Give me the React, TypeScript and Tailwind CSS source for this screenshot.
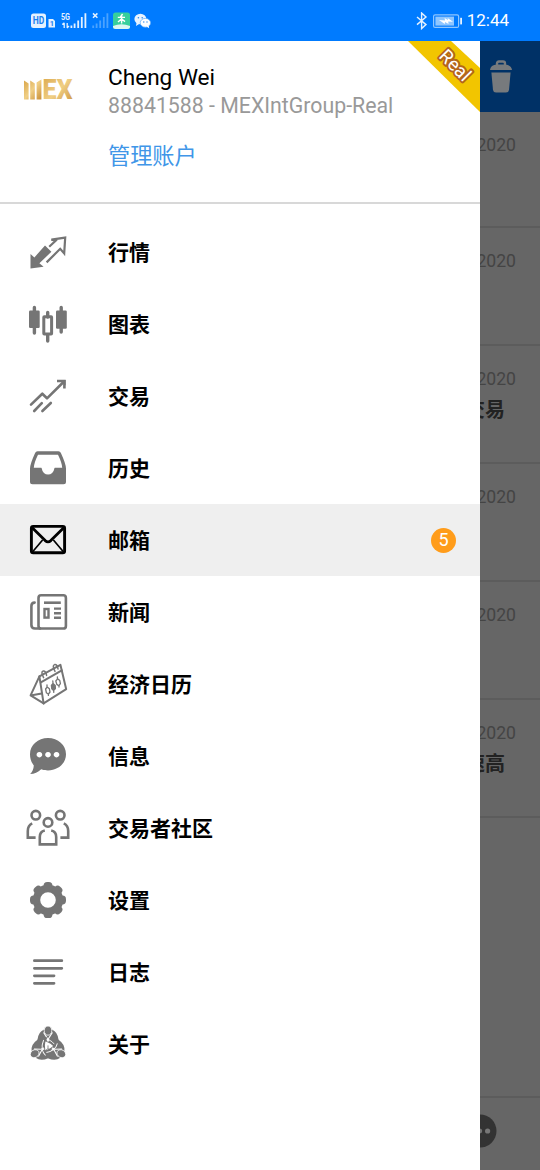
import type { ReactNode } from 'react';

interface MenuItem {
  label: string;
  icon: ReactNode;
  active?: boolean;
  badge?: number;
}

interface MailRow {
  date: string;
  title?: string;
}

const QuotesIcon = () => (
  <>
    <path d="M6.5 26 L10.4 29.4 L21 17.6 L27.4 23.8 L15.4 35.2 L19.6 38.8 L6.5 40.6 Z" fill="currentColor" />
    <path
      d="M25.2 18.8 L31.6 12.8 L27.4 11.6 L41.2 9.6 L40.2 25.4 L36.2 20.8 L22.6 34.4"
      fill="none"
      stroke="currentColor"
      strokeWidth="2.2"
    />
  </>
);

const ChartIcon = () => (
  <>
    <path d="M10.4 7.5 V33 M37.2 7.5 V32" stroke="currentColor" strokeWidth="3.4" strokeLinecap="round" />
    <path d="M23.7 12.5 V17 M23.7 35 V41" stroke="currentColor" strokeWidth="3.4" strokeLinecap="round" />
    <rect x="5" y="10.5" width="10.7" height="17.5" rx="1.2" fill="currentColor" />
    <rect x="32" y="10.5" width="10.8" height="18.3" rx="1.2" fill="currentColor" />
    <rect x="19.8" y="16.8" width="7.8" height="17.2" rx="0.5" fill="none" stroke="currentColor" strokeWidth="3" />
  </>
);

const TradeIcon = () => (
  <g fill="none" stroke="currentColor" strokeWidth="2.6">
    <path d="M7 32.6 L18.3 21.7 L23 26.3 L39.5 10" strokeLinecap="round" strokeLinejoin="round" />
    <path d="M10.2 39 L17.8 31.2 M18.4 39 L26.8 31" strokeLinecap="round" />
    <path d="M33 9 H40.4 V16.4" />
    <path d="M36 8 H41.6 V13.6 Z" fill="currentColor" stroke="none" />
  </g>
);

const HistoryIcon = () => (
  <path
    fillRule="evenodd"
    fill="currentColor"
    d="M13.5 7.3 H34.5 Q36.2 7.3 36.9 8.9 Q42 20 42 24.5 V37.8 Q42 40.3 39.5 40.3 H8.5 Q6 40.3 6 37.8 V24.5 Q6 20 11.1 8.9 Q11.8 7.3 13.5 7.3 Z M14 10.8 Q10 19 9.8 23.8 H17.3 Q17.8 24 17.9 25 A6.2 6.4 0 0 0 30.2 25 Q30.3 24 30.8 23.8 H38.2 Q38 19 34 10.8 Z"
  />
);

const MailIcon = () => (
  <g fill="none" stroke="currentColor">
    <rect x="7.4" y="10.4" width="33.2" height="26.4" rx="1.8" strokeWidth="2.9" />
    <path d="M8 11.5 L21.2 24.6 Q24 27.2 26.8 24.6 L40 11.5" strokeWidth="2.8" />
    <path d="M8.2 36.2 L18.6 24 M39.8 36.2 L29.4 24" strokeWidth="1.7" />
  </g>
);

const NewsIcon = () => (
  <g fill="none" stroke="currentColor" strokeWidth="2.6">
    <rect x="14.5" y="7.3" width="27.4" height="33.2" rx="2.6" />
    <path d="M10.6 14.6 Q7.4 14.6 7.4 18 V37 Q7.4 40.5 11 40.5 H16" strokeLinecap="round" />
    <path d="M20 14.7 H36.8" />
    <rect x="20.5" y="21" width="4" height="8.6" strokeWidth="2.4" />
    <path d="M30 20.6 H37 M30 25.2 H37 M30 29.8 H37" strokeWidth="2.4" />
  </g>
);

const CalendarIcon = () => (
  <g fill="none" stroke="currentColor" strokeWidth="2" strokeLinejoin="round" strokeLinecap="round">
    <path d="M15.4 16.4 L36.4 4.8 L42.2 29.2 L19.6 43.4 Z" />
    <path d="M15.4 16.4 L6.6 35.4 L19.6 43.4 M6.6 35.4 L17.6 33.6" />
    <path d="M16.8 22.4 L37.8 10.4" />
    <path d="M19.6 17.6 Q16.4 11.8 19.2 11 Q21.8 10.6 22.6 15.4 M31 11.4 Q27.8 5.4 30.6 4.6 Q33.4 4.2 34 9" strokeWidth="1.5" />
    <g strokeWidth="1.3">
      <path d="M23 24.8 V27 M24.4 34 V35.4 M21.6 29 L23.2 27 L25.4 28.8 L26 32 L24.4 34.2 L22.4 32.8 Z" />
      <path d="M28.8 21 L29.8 32.4 M27.4 25.4 L29 23.4 L31.2 25.4 L31.4 28.6 L29.6 30.6 L27.8 28.8 Z" fill="currentColor" />
      <path d="M33.4 16.8 V19 M35 25.6 V27 M31.8 21 L33.6 18.8 L35.8 20.6 L36.4 23.6 L34.8 25.8 L32.8 24.4 Z" />
    </g>
  </g>
);

const ChatIcon = () => (
  <path
    fillRule="evenodd"
    fill="currentColor"
    d="M24 6 C34 6 42 13 42 22.2 C42 31.4 34 38.4 24 38.4 C21.6 38.4 19.2 38 17.2 37.2 C14 40.2 10.4 41.8 6.2 42 C8.4 39.6 9.6 36.8 9.8 33.4 C7.4 30.4 6 26.6 6 22.2 C6 13 14 6 24 6 Z M15.4 19.9 a2.8 2.8 0 1 0 0.01 0 Z M24 19.9 a2.8 2.8 0 1 0 0.01 0 Z M32.5 19.9 a2.8 2.8 0 1 0 0.01 0 Z"
  />
);

const CommunityIcon = () => (
  <g fill="none" stroke="currentColor" strokeWidth="2.6">
    <circle cx="11.8" cy="11.2" r="4.3" />
    <circle cx="36.2" cy="11.2" r="4.3" />
    <circle cx="24" cy="18.4" r="4.3" />
    <path d="M8.2 19.4 Q3.8 21.6 3.8 27 V33.6 H11.6" />
    <path d="M39.8 19.4 Q44.2 21.6 44.2 27 V33.6 H36.4" />
    <path d="M20.8 26.6 Q15.8 27.6 15.8 33 V40.4 H32.2 V33 Q32.2 27.6 27.2 26.6" />
  </g>
);

const gearAngles = [0, 45, 90, 135, 180, 225, 270, 315];

const SettingsIcon = () => (
  <>
    <circle cx="24" cy="24" r="11.5" fill="none" stroke="currentColor" strokeWidth="7.4" />
    {gearAngles.map((a) => (
      <rect key={a} x="19.6" y="6" width="8.8" height="9" rx="3.6" fill="currentColor" transform={`rotate(${a} 24 24)`} />
    ))}
  </>
);

const JournalIcon = () => (
  <path
    d="M10.4 12.7 H37.8 M10.4 20.3 H37.8 M10.4 27.8 H30 M10.4 35.3 H30"
    stroke="currentColor"
    strokeWidth="2.8"
    strokeLinecap="round"
  />
);

const AboutIcon = () => (
  <>
    {[0, 120, 240].map((a) => (
      <g key={a} transform={`rotate(${a} 24 26)`}>
        <path
          d="M20 9.4 Q14 12 13.4 20 Q12.6 22.6 15 22.2 Q19.6 20.2 24 22.6 Q29.4 24.8 31.6 29.8 Q35.4 26.6 34.6 20 Q34 12 28 9.4 Z"
          fill="currentColor"
        />
        <path d="M19.6 12.4 L23.4 18.4 V21.4 M28.4 12.4 L24.6 18.4 V21.4" fill="none" stroke="#fff" strokeWidth="1.1" />
        <ellipse cx="24" cy="10.6" rx="3.8" ry="4.6" fill="currentColor" stroke="#fff" strokeWidth="0.8" />
        <path d="M17 19.2 Q24.6 16.8 31.4 25.2" fill="none" stroke="#fff" strokeWidth="0.9" />
      </g>
    ))}
    <path d="M24 25.4 V28.6 M21.6 30.4 L24 28.6 L26.4 30.4" fill="none" stroke="currentColor" strokeWidth="0.8" />
  </>
);

const menu: MenuItem[] = [
  { label: '行情', icon: <QuotesIcon /> },
  { label: '图表', icon: <ChartIcon /> },
  { label: '交易', icon: <TradeIcon /> },
  { label: '历史', icon: <HistoryIcon /> },
  { label: '邮箱', icon: <MailIcon />, active: true, badge: 5 },
  { label: '新闻', icon: <NewsIcon /> },
  { label: '经济日历', icon: <CalendarIcon /> },
  { label: '信息', icon: <ChatIcon /> },
  { label: '交易者社区', icon: <CommunityIcon /> },
  { label: '设置', icon: <SettingsIcon /> },
  { label: '日志', icon: <JournalIcon /> },
  { label: '关于', icon: <AboutIcon /> },
];

const mails: MailRow[] = [
  { date: '2020' },
  { date: '2020' },
  { date: '2020', title: '交易' },
  { date: '2020' },
  { date: '2020' },
  { date: '2020', title: '速高' },
];

function StatusBar() {
  return (
    <div className="flex h-[41px] shrink-0 items-center justify-between bg-[#007bff] pl-[31px] pr-[31px] text-white">
      <div className="flex items-center">
        {/* HD */}
        <svg width="25" height="18" viewBox="0 0 25 18">
          <rect x="0" y="1.5" width="15" height="14.5" rx="2.5" fill="#e4f1ff" />
          <text x="7.5" y="12.4" textAnchor="middle" fontSize="10" fontWeight="700" fill="#1a7ff0" textLength="11.5" lengthAdjust="spacingAndGlyphs">HD</text>
          <path d="M17.5 7 H22 L24 9 V15.5 H17.5 Z" fill="#e4f1ff" />
          <text x="20.8" y="14.2" textAnchor="middle" fontSize="7.5" fontWeight="700" fill="#1a7ff0">1</text>
        </svg>
        {/* 5G signal */}
        <svg className="ml-[5px]" width="26" height="18" viewBox="0 0 26 18">
          <text x="0" y="7.6" fontSize="8.6" fontWeight="700" fill="#e4f1ff" textLength="9" lengthAdjust="spacingAndGlyphs">5G</text>
          <path d="M3.2 16 V11 M1.2 12.6 L3.4 10.8 M6.2 11 V16 M6 16 L8 14" stroke="#e4f1ff" strokeWidth="1.3" fill="none" />
          <path d="M10.4 16 V13.5 M13.6 16 V11.5 M17.2 16 V8.5 M20.8 16 V5 M24.4 16 V1.2" stroke="#e4f1ff" strokeWidth="1.8" />
        </svg>
        <svg className="ml-[5px]" width="17" height="18" viewBox="0 0 17 18">
          <path d="M1 1.4 L5.4 5.8 M5.4 1.4 L1 5.8" stroke="#e4f1ff" strokeWidth="1.5" />
          <path d="M1.2 16 V13.5 M4.6 16 V11.5 M8.2 16 V8.5 M11.8 16 V5 M15.4 16 V1.2" stroke="#4ba3ff" strokeWidth="1.8" />
        </svg>
        <svg className="ml-[4px]" width="17" height="18" viewBox="0 0 17 18">
          <rect x="0" y="0.5" width="17" height="16.5" rx="2.5" fill="#37cf9c" />
          <path d="M0 14 Q8.5 10.4 17 14 V14.5 Q17 17 14.5 17 H2.5 Q0 17 0 14.5 Z" fill="#dcf6f2" />
          <path d="M9.6 2 L7.4 5 M4.8 5.4 H12 M8.6 4 V11.6 M8.4 7 L5 10 M8.8 7 L12 9.6" stroke="#fff" strokeWidth="1.4" fill="none" />
        </svg>
        <svg className="ml-[4px]" width="17" height="18" viewBox="0 0 17 18">
          <ellipse cx="6.4" cy="7" rx="6" ry="5.2" fill="#e8f3ff" />
          <path d="M2.6 10.4 L2 14 L5.6 11.8 Z" fill="#e8f3ff" />
          <ellipse cx="11.4" cy="10.8" rx="5.2" ry="4.4" fill="#fff" stroke="#5aa9f8" strokeWidth="0.7" />
          <path d="M12.4 14.6 L15.2 16.2 L14.6 13.4 Z" fill="#fff" />
          <g fill="#2d88ee">
            <circle cx="4.4" cy="5.8" r="0.8" />
            <circle cx="8.2" cy="5.8" r="0.8" />
            <circle cx="9.8" cy="10" r="0.7" />
            <circle cx="13" cy="10" r="0.7" />
          </g>
        </svg>
      </div>
      <div className="flex items-center">
        <svg width="12" height="18" viewBox="0 0 12 18">
          <path d="M1 5 L10 12.6 L5.6 16.6 V1 L10 5 L1 12.6" fill="none" stroke="#e4f1ff" strokeWidth="1.4" />
        </svg>
        <svg className="ml-[5px]" width="30" height="16" viewBox="0 0 30 16">
          <rect x="0.6" y="1.8" width="25" height="12.6" rx="1.5" fill="none" stroke="#8fc6ff" strokeWidth="1.2" />
          <rect x="2.4" y="3.6" width="18.6" height="9" fill="#8fc6ff" />
          <path d="M6 7 L12 7.6 L11.6 5 L15 7 L14.6 5 L20 8.8 L15.2 8.6 L15.6 11 L12 9 L11.8 11 Z" fill="#fff" />
          <rect x="27.2" y="4.8" width="1.8" height="6.6" fill="#e4f1ff" />
        </svg>
        <span className="ml-[4px] text-[17px] leading-none">12:44</span>
      </div>
    </div>
  );
}

function AccountHeader() {
  return (
    <div className="relative flex h-[163px] shrink-0 border-b-2 border-[#d8d8d8]">
      <div className="w-[108px] pl-[24px] pt-[34px]">
        <svg width="56" height="32" viewBox="0 -3 56 32">
          <defs>
            <linearGradient id="gold" x1="0" y1="0" x2="1" y2="1">
              <stop offset="0" stopColor="#d9a548" />
              <stop offset="0.5" stopColor="#f0cf85" />
              <stop offset="1" stopColor="#c98f38" />
            </linearGradient>
          </defs>
          <path d="M0 2.4 L4.6 5.6 V21.4 H0 Z M6.2 2.4 L10.8 5.6 V21.4 H6.2 Z M12.6 4.4 L17.4 1.6 V21.4 H12.6 Z" fill="url(#gold)" />
          <text x="18.4" y="21.4" fontSize="27" fontWeight="900" fill="url(#gold)" textLength="30" lengthAdjust="spacingAndGlyphs">EX</text>
        </svg>
      </div>
      <div className="flex flex-col pt-[24px]">
        <span className="text-[22.6px] leading-[26px] text-black">Cheng Wei</span>
        <span className="mt-[3px] text-[21.3px] leading-[24px] text-[#999]">88841588 - MEXIntGroup-Real</span>
        <a className="mt-[22px] text-[22.2px] leading-[33px] text-[#4096e8]">管理账户</a>
      </div>
      {/* Corner ribbon */}
      <svg className="absolute right-0 top-0" width="72" height="72" viewBox="0 0 72 72">
        <path d="M0 0 H43 L72 27 V71 Z" fill="#f2c500" />
        <text
          x="0"
          y="0"
          transform="translate(47 24.5) rotate(45)"
          dominantBaseline="central"
          textAnchor="middle"
          fontSize="18.5"
          fill="#fff"
          stroke="#b4651c"
          strokeWidth="4"
          strokeLinejoin="round"
          paintOrder="stroke"
        >
          Real
        </text>
      </svg>
    </div>
  );
}

function Drawer() {
  return (
    <div className="flex w-[480px] shrink-0 flex-col bg-white">
      <AccountHeader />
      <nav className="flex flex-col pt-3">
        {menu.map((item) => (
          <div key={item.label} className={`flex h-[72px] items-center pl-6 pr-6 ${item.active ? 'bg-[#efefef]' : ''}`}>
            <svg width="48" height="48" viewBox="0 0 48 48" className={item.active ? 'text-black' : 'text-[#757575]'}>
              {item.icon}
            </svg>
            <span className="ml-9 flex-1 pt-[3px] text-[21px] font-bold leading-none text-black">{item.label}</span>
            {item.badge && (
              <span className="flex h-[25px] w-[25px] items-center justify-center rounded-full bg-[#ff9c1a] text-[18px] leading-none text-white">
                {item.badge}
              </span>
            )}
          </div>
        ))}
      </nav>
    </div>
  );
}

// Mailbox screen, dimmed behind the open drawer
function MailboxBehind() {
  return (
    <div className="flex w-[60px] flex-col overflow-hidden bg-[#666]">
      <div className="flex h-[71px] shrink-0 justify-end bg-[#003166] pr-[27px] pt-[18px]">
        <svg width="24" height="36" viewBox="0 0 24 36">
          <path d="M8 6 V4.5 Q8 2.5 10 2.5 H14 Q16 2.5 16 4.5 V6" fill="none" stroke="#777a7d" strokeWidth="2.4" />
          <path d="M1 11 Q1.5 6 8 5.6 H16 Q22.5 6 23 11 Z" fill="#777a7d" />
          <path d="M2.4 13.4 H21.6 L20 31 Q19.6 33.6 17 33.6 H7 Q4.4 33.6 4 31 Z" fill="#777a7d" />
        </svg>
      </div>
      <div className="flex flex-1 flex-col">
        {mails.map((mail, i) => (
          <div
            key={i}
            className="flex h-[118px] shrink-0 flex-col items-end border-b-2 border-[#5c5c5c] pr-6 pt-[22px] first:h-[116px] first:pt-[22px]"
          >
            <span className="text-[17.6px] leading-[22px] text-[#444]">{mail.date}</span>
            {mail.title && (
              <span className="mr-[11px] mt-[5px] whitespace-nowrap text-[20px] font-bold leading-[30px] text-[#222]">{mail.title}</span>
            )}
          </div>
        ))}
      </div>
      <div className="flex h-[74px] shrink-0 justify-end border-t-2 border-[#5c5c5c] pr-[43px] pt-[16px]">
        <svg width="34" height="34" viewBox="0 0 34 34" className="shrink-0">
          <circle cx="17" cy="17" r="16.5" fill="#333" />
          <g fill="#777">
            <circle cx="8.6" cy="17" r="2.6" />
            <circle cx="16.6" cy="17" r="2.6" />
            <circle cx="24.6" cy="17" r="2.6" />
          </g>
        </svg>
      </div>
    </div>
  );
}

export default function App() {
  return (
    <div className="flex h-[1170px] w-[540px] flex-col overflow-hidden font-['Roboto','Noto_Sans_CJK_SC',sans-serif]">
      <StatusBar />
      <div className="flex flex-1">
        <Drawer />
        <MailboxBehind />
      </div>
    </div>
  );
}
